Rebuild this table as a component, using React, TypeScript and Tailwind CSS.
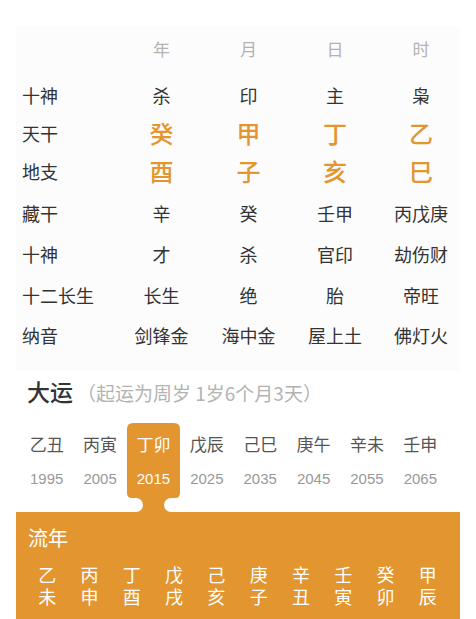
const font = { fontFamily: '"Noto Sans CJK SC", "Noto Sans", sans-serif' }

const columns = ['年', '月', '日', '时']

const rows = [
  { label: '十神', values: ['杀', '印', '主', '枭'], h: 'h-[40px]' },
  { label: '天干', values: ['癸', '甲', '丁', '乙'], h: 'h-[35px]', accent: true },
  { label: '地支', values: ['酉', '子', '亥', '巳'], h: 'h-[42px]', accent: true },
  { label: '藏干', values: ['辛', '癸', '壬甲', '丙戊庚'], h: 'h-[41px]' },
  { label: '十神', values: ['才', '杀', '官印', '劫伤财'], h: 'h-[41px]' },
  { label: '十二长生', values: ['长生', '绝', '胎', '帝旺'], h: 'h-[41px]' },
  { label: '纳音', values: ['剑锋金', '海中金', '屋上土', '佛灯火'], h: 'h-[39px]' },
]

const dayun = [
  { gz: '乙丑', year: 1995 },
  { gz: '丙寅', year: 2005 },
  { gz: '丁卯', year: 2015 },
  { gz: '戊辰', year: 2025 },
  { gz: '己巳', year: 2035 },
  { gz: '庚午', year: 2045 },
  { gz: '辛未', year: 2055 },
  { gz: '壬申', year: 2065 },
]

const liunian = [
  ['乙', '未'],
  ['丙', '申'],
  ['丁', '酉'],
  ['戊', '戌'],
  ['己', '亥'],
  ['庚', '子'],
  ['辛', '丑'],
  ['壬', '寅'],
  ['癸', '卯'],
  ['甲', '辰'],
]

// tab shape behind the selected 大运, with the neck running down into the 流年 band
const ActiveTab = () => (
  <svg className="absolute left-0 top-0" width="53" height="90" viewBox="0 0 53 90">
    <path
      d="M0 6 Q0 0 6 0 H47 Q53 0 53 6 V70 Q53 75 48 75 H44 A7 7 0 0 0 37 82 A7 7 0 0 0 44 89 V90 H9 V89 A7 7 0 0 0 16 82 A7 7 0 0 0 9 75 H5 Q0 75 0 70 Z"
      fill="#e3952f"
    />
  </svg>
)

export default function App() {
  return (
    <div className="w-[476px] h-[619px] overflow-hidden bg-white px-4 pt-[26px]" style={font}>
      <div className="bg-[#fcfcfd] pb-[17px]">
        <div className="grid grid-cols-[102px_87px_87px_86px_86px] h-[44px] items-center">
          <div />
          {columns.map((c) => (
            <div key={c} className="text-center text-[17px] leading-none text-[#b3b3b3]">
              {c}
            </div>
          ))}
        </div>
        <div className="mt-[5px]">
          {rows.map((r, i) => (
            <div key={i} className={`grid grid-cols-[102px_87px_87px_86px_86px] items-center ${r.h}`}>
              <div className="pl-[6px] text-[18px] leading-none text-[#333]">{r.label}</div>
              {r.values.map((v, j) => (
                <div
                  key={j}
                  className={
                    r.accent
                      ? 'text-center text-[24px] leading-none font-medium text-[#e3952f]'
                      : 'text-center text-[18px] leading-none text-[#333]'
                  }
                >
                  {v}
                </div>
              ))}
            </div>
          ))}
        </div>
      </div>

      <div className="bg-white">
        <div className="flex items-baseline h-[46px] pt-[9px] pl-[11px]">
          <span className="text-[23px] leading-none font-medium text-[#333]">大运</span>
          <span className="ml-[4px] text-[19px] leading-none text-[#b3b3b3]">（起运为周岁 1岁6个月3天）</span>
        </div>
        <div className="ml-[4px] w-[427px] grid grid-cols-8 mt-[6px] h-[89px]">
          {dayun.map((d, i) => {
            const active = i === 2
            return (
              <div key={d.gz} className="relative flex flex-col items-center">
                {active && <ActiveTab />}
                <div
                  className={`relative mt-[12px] text-[17px] leading-none ${active ? 'text-white' : 'text-[#555]'}`}
                >
                  {d.gz}
                </div>
                <div
                  className={`relative mt-[19px] text-[15px] leading-none ${active ? 'text-white' : 'text-[#999]'}`}
                  style={{ fontFamily: '"Liberation Sans", "Noto Sans", sans-serif' }}
                >
                  {d.year}
                </div>
              </div>
            )
          })}
        </div>
      </div>

      <div className="bg-[#e3952f] h-[120px] pt-[16px]">
        <div className="pl-[12px] text-[20px] leading-none text-white">流年</div>
        <div className="ml-[10px] w-[423px] grid grid-cols-10 mt-[17px]">
          {liunian.map(([a, b], i) => (
            <div key={i} className="flex flex-col items-center gap-[4px] text-[18px] leading-none text-white">
              <span>{a}</span>
              <span>{b}</span>
            </div>
          ))}
        </div>
      </div>
    </div>
  )
}
